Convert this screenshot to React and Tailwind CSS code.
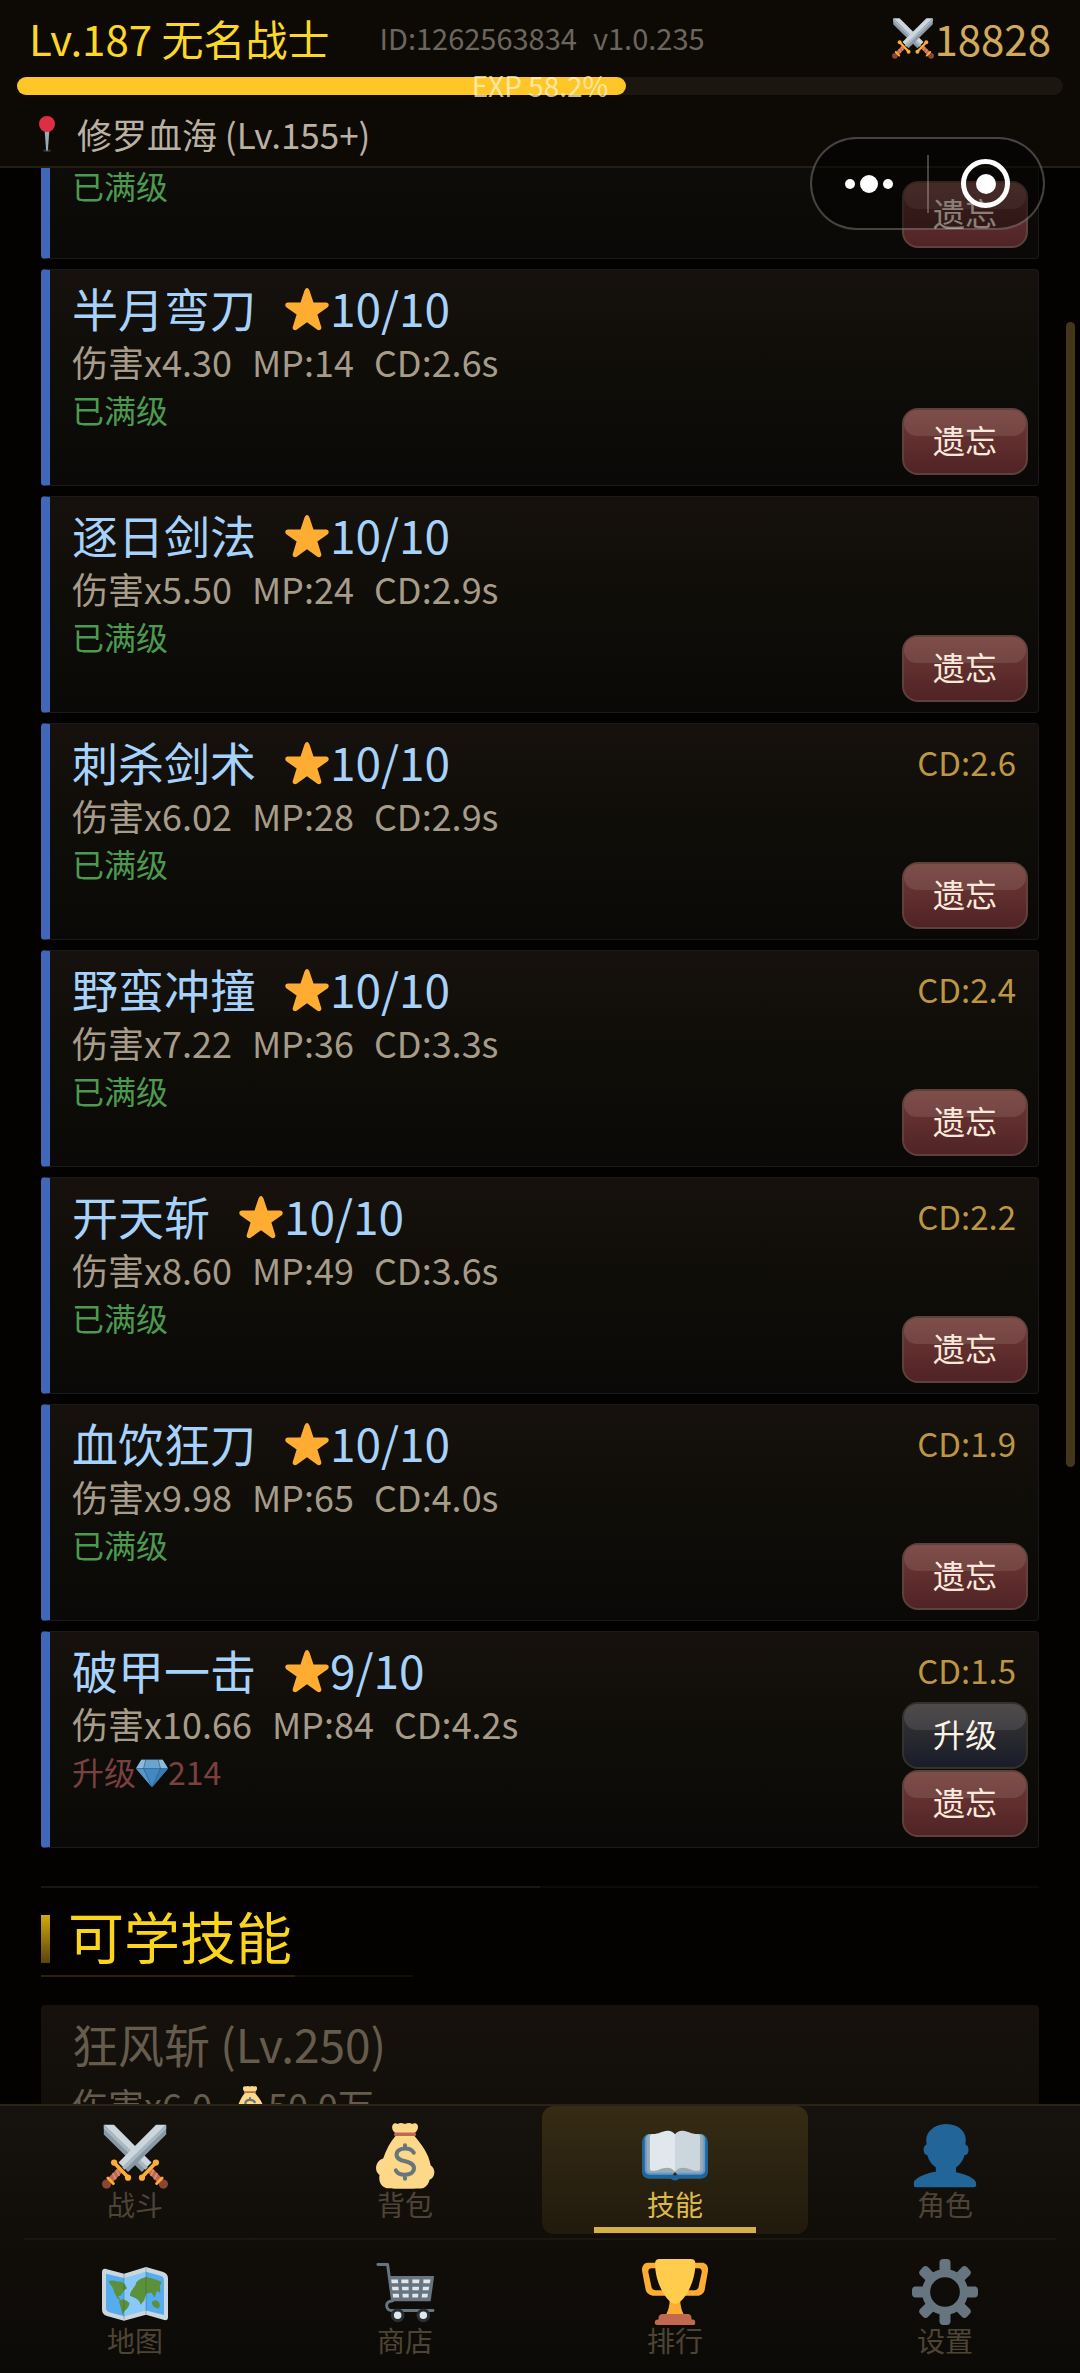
const learnedSkills = [
  { name: "半月弯刀", level: "10/10", damage: "4.30", mp: 14, cd: "2.6" },
  { name: "逐日剑法", level: "10/10", damage: "5.50", mp: 24, cd: "2.9" },
  { name: "刺杀剑术", level: "10/10", damage: "6.02", mp: 28, cd: "2.9", cooling: "2.6" },
  { name: "野蛮冲撞", level: "10/10", damage: "7.22", mp: 36, cd: "3.3", cooling: "2.4" },
  { name: "开天斩", level: "10/10", damage: "8.60", mp: 49, cd: "3.6", cooling: "2.2" },
  { name: "血饮狂刀", level: "10/10", damage: "9.98", mp: 65, cd: "4.0", cooling: "1.9" },
  { name: "破甲一击", level: "9/10", damage: "10.66", mp: 84, cd: "4.2", cooling: "1.5", cost: 214 }
];

const navRows = [
  [
    { label: "战斗", icon: SwordsIcon },
    { label: "背包", icon: MoneyBagIcon },
    { label: "技能", icon: BookIcon, active: true },
    { label: "角色", icon: PersonIcon }
  ],
  [
    { label: "地图", icon: MapIcon },
    { label: "商店", icon: CartIcon },
    { label: "排行", icon: TrophyIcon },
    { label: "设置", icon: GearIcon }
  ]
];

function Icon({ className, children }) {
  return (
    <svg viewBox="0 0 36 36" className={className} aria-hidden="true">
      {children}
    </svg>
  );
}

function Sword() {
  return (
    <>
      <path fill="#CCD6DD" d="M35 1h-5.5L9 21.5l2.6 2.6L35 1z" />
      <path fill="#8899A6" d="M35 1v5.3L14.2 26.7l-2.8-2.8L35 1z" />
      <path fill="#AAB8C2" d="M35 1 11 24.2l1.3 1.3L35 3.2V1z" />
      <path stroke="#C1694F" strokeWidth="3.4" d="m10 25.6-5.4 5.6" />
      <path stroke="#DD8A74" strokeWidth="1" d="m7.8 25.4 1.6 3.4M5.9 27.4l1.6 3.4" />
      <circle cx="2.5" cy="33.3" r="2.5" fill="#8A4633" />
      <path stroke="#FFAC33" strokeWidth="1.6" strokeLinecap="round" d="m3.2 30 3 3" />
      <path stroke="#FFAC33" strokeWidth="2" strokeLinecap="round" d="m6.8 21.8 7.4 7.8" />
      <circle cx="6.6" cy="21.6" r="1.7" fill="#FFAC33" />
      <circle cx="14.2" cy="29.8" r="1.7" fill="#FFAC33" />
    </>
  );
}

function SwordsIcon({ className }) {
  return (
    <Icon className={className}>
      <g transform="translate(36 0) scale(-1 1)">
        <Sword />
      </g>
      <Sword />
    </Icon>
  );
}

function MoneyBagIcon({ className }) {
  return (
    <Icon className={className}>
      <path
        fill="#FDD888"
        d="M12.7 5.5C11.2 4.6 10.6 2.6 11.2 1.2c.6-1.3 2-1.2 2.8-.6 1.3-.8 2.4-.7 3.9 0 1.5-.7 2.8-.8 4.1 0 .8-.6 2.3-.7 2.9.6.6 1.4-.2 3.4-1.6 4.3v1.7c3.6 4.4 7.6 9.4 8.7 15.8 1.4 1 2.1 2.5 2 4.1-.1 1.9-1.2 3.2-2.6 3.9-.3 1.9-1.6 3.8-3.6 4.6-1 .3-18.100.4-19.8 0-3.100-1-4.5-3.5-3.900-7.2-1.8-1.300-2.400-3.600-1.500-5.900.6-1.600 2-2.600 3.500-3.100 1.600-4.900 3.800-9 6.600-12.200z"
      />
      <path fill="#BF6952" d="M12.6 5.2h10.900c.6 0 .6 1.900 0 1.900H12.600c-.7 0-.7-1.900 0-1.900z" />
      <path
        fill="none"
        stroke="#67757F"
        strokeWidth="2.2"
        strokeLinecap="round"
        d="M22.8 16.2c-.9-1.6-2.5-2.3-4.7-2.3-2.7 0-4.7 1.2-4.7 3.4 0 4.8 9.5 2.4 9.5 7.3 0 2.4-2.1 3.6-4.9 3.6-2.3 0-4.2-.8-5-2.4M18 12.2v1.400M18 28.400v2"
      />
    </Icon>
  );
}

function BookIcon({ className }) {
  return (
    <Icon className={className}>
      <path fill="#226699" d="M4 6h28c2.5 0 4 2.5 4 5v15.5c0 2.3-1.6 3.9-4 3.9H20.5c-.6 0-1 .9-2.5.9s-1.9-.9-2.5-.9H4c-2.4 0-4-1.6-4-3.9V11c0-2.5 1.5-5 4-5z" />
      <path fill="#5C9BD0" d="M4.5 6h27c1.9 0 3 1.3 3 3v16.5c0 1.6-1 2.7-2.7 2.7H4.2c-1.7 0-2.7-1.1-2.7-2.7V9c0-1.7 1.1-3 3-3z" />
      <path fill="#99AAB5" d="M5 6h26c1.5 0 2.5.9 2.5 2.4v16.4c0 1.4-.9 2.4-2.5 2.4H20l-2 .9-2-.9H5c-1.6 0-2.5-1-2.5-2.4V8.400C2.500 6.900 3.500 6 5 6z" />
      <path fill="#E1E8ED" d="M18 6.2c-1.2-1.5-2.6-2.2-4.3-2-2.7.3-4.7 1.8-7.7 1.8-1.2 0-1.7.6-1.7 1.7v17c0 1 .6 1.4 1.6 1.4 3 0 4.7-1.7 7.7-1.7 2 0 3.4.9 4.4 2.2V6.200z" />
      <path fill="#CCD6DD" d="M18 6.2c1.2-1.5 2.6-2.2 4.3-2 2.7.3 4.7 1.8 7.7 1.8 1.2 0 1.7.6 1.7 1.7v17c0 1-.6 1.4-1.6 1.4-3 0-4.7-1.7-7.7-1.7-2 0-3.400.9-4.400 2.200V6.200z" />
      <path fill="#292F33" d="m18 26.7 1.3 1.3-1.3.9-1.3-.9z" />
    </Icon>
  );
}

function PersonIcon({ className }) {
  return (
    <Icon className={className}>
      <path
        fill="#226699"
        d="M24 26.799v-2.566c2-1.348 4.080-3.779 4.703-6.896.186.103.206.170.413.170.991 0 1.709-1.287 1.709-2.873 0-1.562-.823-2.827-1.794-2.865.187-.674.293-1.577.293-2.735C29.324 5.168 26 .527 18.541.527c-6.629 0-10.777 4.641-10.777 8.507 0 1.123.069 2.043.188 2.755-.911.137-1.629 1.352-1.629 2.845 0 1.587.804 2.873 1.796 2.873.206 0 .025-.067.209-.170C8.952 20.453 11 22.885 13 24.232v2.414c-5 .645-12 3.437-12 6.230v1.061C1 35 2.076 35 3.137 35h29.725C33.924 35 35 35 35 33.938v-1.061c0-2.615-6-5.225-11-6.078z"
      />
    </Icon>
  );
}

function MapIcon({ className }) {
  return (
    <Icon className={className}>
      <path fill="#CCD6DD" d="M2.2 5.4 12 8l12-3.600L33 7c2 .6 3 1.800 3 3.600v21.200c0 1.200-.8 1.800-2 1.500L24 30.400l-12 3.300-9.300-2.600C.8 30.500 0 29.300 0 27.600V7.200c0-1.400.8-2.200 2.200-1.800z" />
      <path fill="#55ACEE" d="M2.2 8 12 10.300v20.900l-8-2.200c-1.200-.4-1.800-1.100-1.800-2.300V8zM24 7l8 2.200c1.200.4 1.800 1.200 1.800 2.400v19L24 28.100V7z" />
      <path fill="#88C9F9" d="m12 10.300 12-3.400v21.200l-12 3.200z" />
      <path fill="#5C913B" d="M3.500 12.200c1.400-.9 3.200-.2 5.200.1 1.800-.2 2.700.6 3.800 1.500l1.200 2.200-2 1.400-1.500 2.600-1.400.2 2 3.600-2.600-2.600-1.700-3.400c-.2-2.400-1.900-3.600-3-5.600zM10 22.400c1.600-.7 3.300 0 5 1.600-.2 2-1.200 3.200-2.600 4.200l-1.300 2.200-.9-4-.7-2.200c-.3-.8 0-1.500.5-1.800z" />
      <path fill="#5C913B" d="M16.500 16.800c.8-1.700 2.200-2.400 2.100-4 1.500-1.700 3-2.400 5.400-3l2.600.5 3.800 1.300 2 .8-.8 2.400.2 3.600-1.800-1-1.400 3.600-1.600-2.600-2.800.4-1.200 3.800-2 2.300-.6-1.900-1.800-1.500-3.300-1.400c-.2-1.100.4-2.300 1.200-3.300zM27.200 23.600c1-1.400 2.600-1.500 4 .2.700 1.300.3 2.700-.7 3.400-1.400-1-3.200-1-3.300-3.600z" />
      <path stroke="#292F33" strokeOpacity=".5" strokeWidth=".3" d="M12 8v25M24 5v25" />
    </Icon>
  );
}

function CartIcon({ className }) {
  return (
    <Icon className={className}>
      <path fill="none" stroke="#66757F" strokeWidth="1.6" strokeLinecap="round" strokeLinejoin="round" d="M3.200 3h5.300l2.700 19.800c-2.300.3-3.300 1.300-3.200 2.700.1 1.600 1.100 2.600 2.800 2.600h22.500" />
      <path fill="#66757F" d="M9.400 9.300h24.500l-1.900 13.700H11z" />
      <path fill="#E1E8ED" d="M10.500 11.200h3.600l.2 2h-3.600zM16 11.200h3.900v2h-3.900zM22 11.200h3.900l-.2 2H22zM28 11.200h3.900l-.4 2h-3.500zM10.900 15.100h3.500l.2 2h-3.500zM16.300 15.100h3.700v2h-3.500zM22 15.100h3.700l-.2 2H22zM27.800 15.100h3.400l-.3 2h-3.300zM11.300 19h3.300l.2 2h-3.300zM16.600 19H20v2h-3.200zM22 19h3.300l-.2 2H22zM27.300 19h3.200l-.3 2h-3.100z" />
      <circle cx="14" cy="30.7" r="2.9" fill="#E1E8ED" stroke="#292F33" strokeWidth="1.7" />
      <circle cx="28" cy="30.7" r="2.9" fill="#E1E8ED" stroke="#292F33" strokeWidth="1.7" />
    </Icon>
  );
}

function TrophyIcon({ className }) {
  return (
    <Icon className={className}>
      <path
        fill="#FFAC33"
        d="M5.123 5h6C12.227 5 13 4.896 13 6V4c0-1.104-.773-2-1.877-2h-8c-2 0-3.583 2.125-3 5 0 0 1.791 9.375 1.917 9.958C2.373 18.500 4.164 20 6.081 20h6.958c1.105 0-.039-1.896-.039-3v-2c0 1.104-.773 2-1.877 2h-4c-1.104 0-1.833-1.042-2-2S3.539 7.667 3.539 7.667C3.206 5.750 4.018 5 5.123 5zm25.812 0h-6C23.831 5 22 4.896 22 6V4c0-1.104 1.831-2 2.935-2h8c2 0 3.584 2.125 3 5 0 0-1.633 9.419-1.771 10-.354 1.500-2.042 3-4 3h-7.146C21.914 20 22 18.104 22 17v-2c0 1.104 1.831 2 2.935 2h4c1.104 0 1.834-1.042 2-2s1.584-7.333 1.584-7.333C32.851 5.750 32.040 5 30.935 5zM20.832 22c0-6.958-2.709 0-2.709 0s-3-6.958-3 0-3.291 10-3.291 10h12.292c-.001 0-3.292-3.042-3.292-10z"
      />
      <path fill="#FFCC4D" d="M29.123 2.500C29.123 14 22 24.500 18.123 24.500S7.123 14 7.123 2.500C7.123.8 8 0 9.623 0h17c1.700 0 2.500.8 2.500 2.500z" />
      <path fill="#C1694F" d="M27 33c0 1.104.227 2-.877 2h-16C9.018 35 9 34.104 9 33v-1c0-1.104 1.164-2 2.206-2h13.917c1.042 0 1.877.896 1.877 2v1z" />
      <path fill="#C1694F" d="M29 34.625c0 .760.165 1.375-1.252 1.375H8.498C7.206 36 7 35.385 7 34.625v-.250C7 33.615 7.738 33 8.498 33h19.250c.759 0 1.252.615 1.252 1.375v.250z" />
    </Icon>
  );
}

function GearIcon({ className }) {
  return (
    <Icon className={className}>
      <circle cx="18" cy="18" r="10.3" fill="none" stroke="#66757F" strokeWidth="4.4" />
      {[0, 45, 90, 135, 180, 225, 270, 315].map((angle) => (
        <path
          key={angle}
          fill="#66757F"
          transform={`rotate(${angle} 18 18)`}
          d="M15 7.500V2c0-1.300.7-2 2-2h2c1.300 0 2 .7 2 2v5.500z"
        />
      ))}
    </Icon>
  );
}

function StarIcon({ className }) {
  return (
    <Icon className={className}>
      <path
        fill="#FFAC33"
        d="M27.287 34.627c-.404 0-.806-.124-1.152-.371L18 28.422l-8.135 5.834c-.346.247-.748.371-1.152.371-.4 0-.802-.120-1.146-.366-.7-.501-.993-1.403-.726-2.219l3.034-9.792-8.062-5.679c-.7-.5-.993-1.402-.727-2.219.266-.818 1.027-1.370 1.885-1.371l9.947-.014 3.188-9.548C16.374 2.608 17.137 1.500 18 1.500c.860 0 1.624 1.108 1.894 1.917l3.188 9.548 9.947.014c.858.001 1.620.553 1.886 1.371.266.817-.027 1.719-.727 2.219l-8.062 5.679 3.034 9.792c.267.816-.026 1.718-.726 2.219-.345.247-.747.368-1.147.368z"
      />
    </Icon>
  );
}

function GemIcon({ className }) {
  return (
    <Icon className={className}>
      <path fill="#4289C1" d="M6 3h24l6 10-18 21L0 13z" />
      <path fill="#8CB9DC" d="M6 3h5l-2.500 10H0zM25 3h5l6 10h-8.500z" />
      <path fill="#6AA5D0" d="M11 3h14l2.500 10h-19z" />
      <path fill="#5A96C8" d="M0 13h8.500L18 34z" />
      <path fill="#3A7CB2" d="M36 13h-8.500L18 34z" />
      <path fill="none" stroke="#1E4F78" strokeWidth=".6" d="M0 13h36M11 3 8.500 13 18 34l9.500-21L25 3" />
    </Icon>
  );
}

function PinIcon({ className }) {
  return (
    <Icon className={className}>
      <ellipse cx="18" cy="34.5" rx="4" ry="1.5" fill="#292F33" />
      <path fill="#99AAB5" d="M15.600 14h4.800l-1.500 20c-.1 1.200-1.700 1.200-1.800 0z" />
      <circle cx="18" cy="8" r="8" fill="#DD2E44" />
    </Icon>
  );
}

function SkillButton({ variant = "danger", children }) {
  return (
    <button
      type="button"
      className={
        variant === "danger"
          ? "relative h-[67px] w-[126px] rounded-2xl border-2 border-[#60403a] bg-linear-to-b from-[#703a35] to-[#502326] pb-1.5 text-[32px] leading-none text-[#fbe9dc]"
          : "relative h-[67px] w-[126px] rounded-2xl border-2 border-[#35322a] bg-linear-to-b from-[#3b3636] to-[#191d29] pb-1.5 text-[32px] leading-none text-[#fbf3e6]"
      }
    >
      <span className="absolute inset-x-0 top-0 h-[26px] rounded-[14px] bg-white/10" />
      <span className="relative">{children}</span>
    </button>
  );
}

function SkillCard({ skill }) {
  return (
    <li className="flex min-h-[217px] justify-between rounded border border-l-9 border-[#1a1a1a] border-l-[#4168b8] bg-linear-to-b from-[#16110c] via-[#0f0d08] to-[#0a0907] pt-[9px] pr-2.5 pb-2.5 pl-[22px]">
      <div>
        <h3 className="flex items-center text-[46px] leading-[56px] text-[#a6d2fb]">
          {skill.name}
          <StarIcon className="mt-1 ml-7 size-[46px]" />
          {skill.level}
        </h3>
        <p className="flex gap-5 text-[36px] leading-[52px] text-[#a79c8a]">
          <span>伤害x{skill.damage}</span>
          <span>MP:{skill.mp}</span>
          <span>CD:{skill.cd}s</span>
        </p>
        {skill.cost ? (
          <p className="flex items-center text-[32px] leading-[44px] text-[#7a4040]">
            升级
            <GemIcon className="mt-1 size-8" />
            {skill.cost}
          </p>
        ) : (
          <p className="text-[32px] leading-[44px] text-[#4c9a50]">已满级</p>
        )}
      </div>

      <div className="flex flex-col items-end justify-between">
        <span className="mr-3 h-14 text-[33px] leading-[58px] text-[#bd9644]">
          {skill.cooling && `CD:${skill.cooling}`}
        </span>
        <div className="flex flex-col gap-px">
          {skill.cost && <SkillButton variant="upgrade">升级</SkillButton>}
          <SkillButton>遗忘</SkillButton>
        </div>
      </div>
    </li>
  );
}

// Lower part of the card that is scrolled under the header
function SkillCardTail() {
  return (
    <li className="flex min-h-[91px] items-end justify-between rounded-b border border-t-0 border-l-9 border-[#1a1a1a] border-l-[#4168b8] bg-linear-to-b from-[#0e0c08] to-[#0a0907] pr-2.5 pb-2.5 pl-[22px]">
      <p className="self-start text-[32px] leading-[34px] text-[#4c9a50]">已满级</p>
      <SkillButton>遗忘</SkillButton>
    </li>
  );
}

function Header() {
  return (
    <header className="shrink-0 border-b-2 border-[#241e12] bg-[#0d0a06]">
      <div className="flex h-[77px] items-center px-[29px] pb-0.5">
        <h1 className="text-[42px] leading-none text-[#fbd727]">Lv.187 无名战士</h1>
        <p className="ml-[50px] flex gap-4 text-[29px] leading-none text-[#6b665f]">
          <span>ID:1262563834</span>
          <span>v1.0.235</span>
        </p>
        <p className="ml-auto flex items-center text-[42px] leading-none text-[#d0a95c]">
          <SwordsIcon className="size-[42px]" />
          18828
        </p>
      </div>

      <div className="relative mx-[17px] h-[18px] rounded-full bg-[#1b160f]">
        <div className="h-full rounded-full bg-[#ffc627]" style={{ width: "58.2%" }} />
        <span className="absolute inset-0 flex items-center justify-center pb-0.5 text-[28px] leading-none text-[#fff3cf]/75">
          EXP 58.2%
        </span>
      </div>

      <p className="flex h-[71px] items-center gap-3 pt-1.5 pl-[29px] text-[35px] leading-none text-[#bbb1a3]">
        <PinIcon className="size-9" />
        修罗血海 (Lv.155+)
      </p>
    </header>
  );
}

function Capsule() {
  return (
    <div className="absolute top-[137px] right-[35px] flex h-[93px] w-[235px] items-center rounded-full border-2 border-white/25 bg-black/45">
      <button type="button" aria-label="更多" className="flex h-full flex-1 items-center justify-center gap-[5px]">
        <span className="size-2.5 rounded-full bg-white" />
        <span className="size-[18px] rounded-full bg-white" />
        <span className="size-2.5 rounded-full bg-white" />
      </button>
      <span className="h-[58px] w-0.5 bg-white/25" />
      <button type="button" aria-label="关闭" className="flex h-full flex-1 items-center justify-center">
        <span className="flex size-[49px] items-center justify-center rounded-full border-5 border-white">
          <span className="size-5 rounded-full bg-white" />
        </span>
      </button>
    </div>
  );
}

function NavItem({ item }) {
  const ItemIcon = item.icon;

  return (
    <button
      type="button"
      className={
        item.active
          ? "relative mx-0.5 flex h-32 flex-1 flex-col items-center rounded-xl bg-linear-to-b from-[#362c14] to-[#211a0d] pt-[17px] text-[28px] leading-[30px] text-[#dcb94a]"
          : "relative mx-0.5 flex h-32 flex-1 flex-col items-center rounded-xl pt-[17px] text-[28px] leading-[30px] text-[#4d4435]"
      }
    >
      <ItemIcon className="size-[66px]" />
      {item.label}
      {item.active && <span className="absolute inset-x-[52px] bottom-px h-1.5 bg-[#d4b045]" />}
    </button>
  );
}

export default function App() {
  return (
    <div className="relative flex h-screen flex-col overflow-hidden bg-[#030201] font-['Noto_Sans_CJK_SC',sans-serif]">
      <Header />

      <main className="min-h-0 flex-1 overflow-hidden px-[41px]">
        <ul className="flex flex-col gap-2.5">
          <SkillCardTail />
          {learnedSkills.map((skill) => (
            <SkillCard key={skill.name} skill={skill} />
          ))}
        </ul>

        <div className="mt-[38px] flex h-0.5">
          <span className="flex-1 bg-[#1a1711]" />
          <span className="flex-1 bg-[#0c0b08]" />
        </div>

        <section>
          <div className="flex h-[87px] items-center gap-[18px] pt-3.5">
            <span className="h-12 w-[9px] bg-linear-to-b from-[#d0ab0c] to-[#5c440c]" />
            <h2 className="pb-2 text-[56px] leading-none text-[#fbd41c]">可学技能</h2>
          </div>
          <div className="flex h-0.5">
            <span className="w-[254px] bg-[#2b2308]" />
            <span className="w-[118px] bg-[#100e07]" />
          </div>

          <article className="mt-7 rounded bg-linear-to-b from-[#16110c] to-[#0f0d08] pt-2.5 pb-10 pl-[31px] text-[#665c4e]">
            <h3 className="text-[46px] leading-[56px]">狂风斩 (Lv.250)</h3>
            <p className="flex items-center text-[36px] leading-[66px]">
              伤害x6.0
              <MoneyBagIcon className="ml-5 size-9" />
              50.0万
            </p>
          </article>
        </section>
      </main>

      <nav className="shrink-0 border-t-2 border-[#2b2315] bg-linear-to-b from-[#16120d] to-[#0c0a07] pb-[3px]" aria-label="主菜单">
        <div className="flex">
          {navRows[0].map((item) => (
            <NavItem key={item.label} item={item} />
          ))}
        </div>
        <div className="mx-6 mt-1 mb-0.5 h-0.5 bg-[#1a1610]" />
        <div className="flex">
          {navRows[1].map((item) => (
            <NavItem key={item.label} item={item} />
          ))}
        </div>
      </nav>

      <Capsule />
      <span className="absolute top-[322px] right-[5px] h-[1145px] w-[9px] rounded-full bg-[#44361b]" />
    </div>
  );
}
